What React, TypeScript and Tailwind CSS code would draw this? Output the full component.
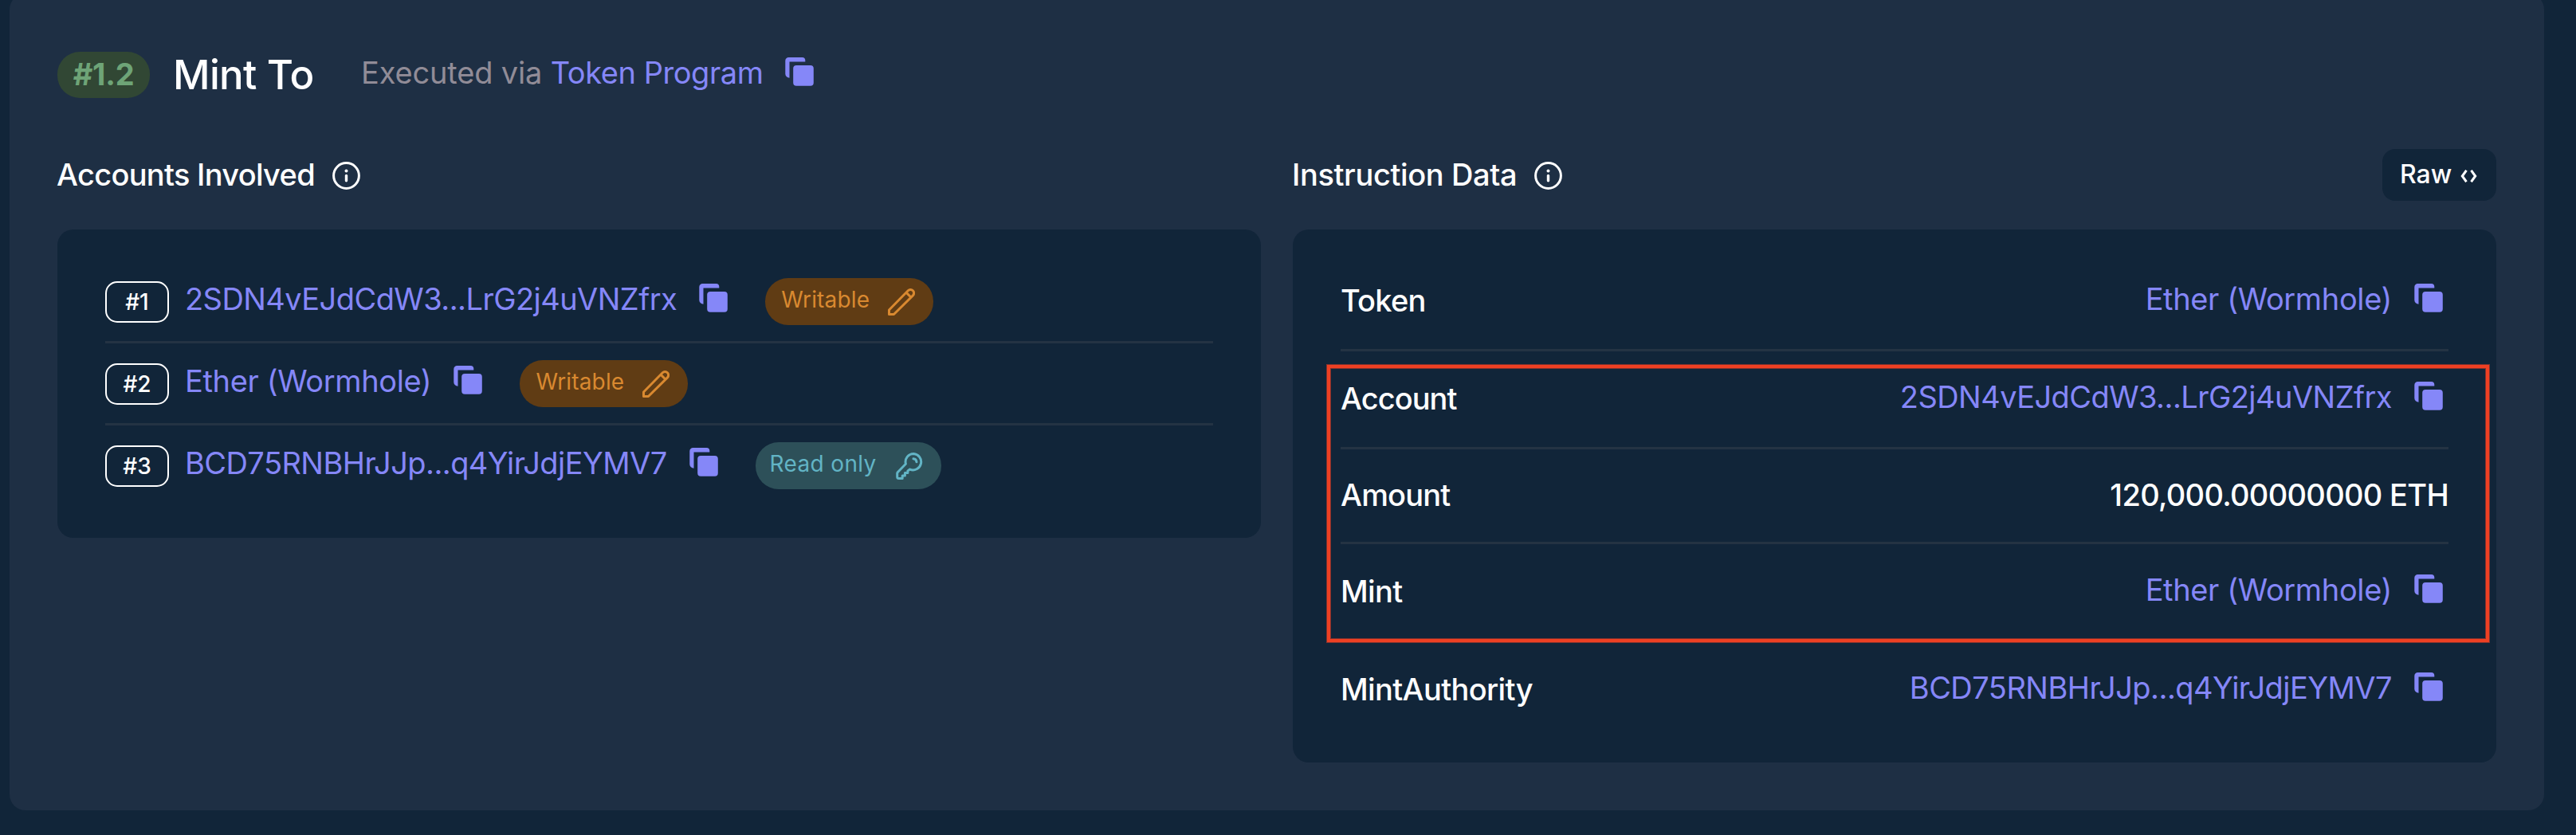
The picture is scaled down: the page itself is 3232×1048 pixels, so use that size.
import React from "react";

function CopyIcon() {
  return (
    <svg className="h-9 w-9 shrink-0" viewBox="0 0 36 36" fill="#8587f8">
      <path d="M4.500 0H21.500a3.800 3.800 0 0 1 3.800 3.800V5.500H5.500v20.200a5.200 5.200 0 0 1-5.200-5V4.200A4.200 4.200 0 0 1 4.500 0z" />
      <rect x="10.200" y="10" width="25.600" height="25.800" rx="4" />
    </svg>
  );
}

function InfoIcon() {
  return (
    <svg className="mt-0.5 h-[35px] w-[35px] shrink-0" viewBox="0 0 35 35" fill="none" stroke="#fff">
      <circle cx="17.500" cy="17.500" r="15.900" strokeWidth="3" />
      <path d="M17.500 17.500v6.300" strokeWidth="3.400" strokeLinecap="round" />
      <circle cx="17.500" cy="11.600" r="2" fill="#fff" stroke="none" />
    </svg>
  );
}

function PencilIcon() {
  return (
    <svg className="h-[34px] w-[34px] shrink-0" viewBox="0 0 34 34" fill="none" stroke="#d98930" strokeWidth="3" strokeLinejoin="round">
      <path d="M1.500 27 L25.300 2.800 a4.300 4.300 0 0 1 6.100 6.100 L7.500 32.500 H1.500z M23 5.100 l6.100 6.100" />
    </svg>
  );
}

function KeyIcon() {
  return (
    <svg className="h-[34px] w-[34px] shrink-0" viewBox="0 0 34 34" fill="none" stroke="#62b4c5" strokeWidth="3" strokeLinejoin="round" strokeLinecap="round">
      <path d="M22.300 1.500a10.200 10.200 0 0 0-9.900 12.700L2.500 24.500a2 2 0 0 0-.8 1.500v4.500a2 2 0 0 0 2 2h4.500v-3.500h3.200v-3.500h3.500v-2.600l2.700-1.800a10.200 10.200 0 1 0 4.700-19.600z" />
      <path d="M22 7.800a4.400 4.400 0 0 1 4 4" />
    </svg>
  );
}

function Pill({ kind }: { kind: "w" | "r" }) {
  const w = kind === "w";
  return (
    <span
      className={
        w
          ? "mt-px flex h-[59px] w-[211px] items-center justify-between rounded-[29px] bg-[#603c14] pr-[23px] pl-5 text-[28px] tracking-[0.16px] text-[#d98930]"
          : "mt-px flex h-[59px] w-[233px] items-center justify-between rounded-[29px] bg-[#2d5059] pr-[23px] pl-[18px] text-[28px] tracking-[0.35px] text-[#62b4c5]"
      }
    >
      <span className="mb-1.5">{w ? "Writable" : "Read only"}</span>
      {w ? <PencilIcon /> : <KeyIcon />}
    </span>
  );
}

const accounts: { n: string; name: string; kind: "w" | "r"; track: string }[] = [
  { n: "#1", name: "2SDN4vEJdCdW3...LrG2j4uVNZfrx", kind: "w", track: "tracking-[-0.56px]" },
  { n: "#2", name: "Ether (Wormhole)", kind: "w", track: "tracking-[-0.37px]" },
  { n: "#3", name: "BCD75RNBHrJJp...q4YirJdjEYMV7", kind: "r", track: "tracking-[-0.56px]" },
];

const data = [
  { label: "Token", lt: "tracking-[-0.75px]", value: "Ether (Wormhole)", track: "tracking-[-0.37px]", link: true, h: "h-[123px]" },
  { label: "Account", lt: "tracking-[-0.95px]", value: "2SDN4vEJdCdW3...LrG2j4uVNZfrx", track: "tracking-[-0.56px]", link: true, h: "h-[123px]" },
  { label: "Amount", lt: "tracking-[-0.8px]", value: "120,000.00000000 ETH", track: "tracking-[-0.7px]", link: false, h: "h-[119px]" },
  { label: "Mint", lt: "tracking-[-0.6px]", value: "Ether (Wormhole)", track: "tracking-[-0.37px]", link: true, h: "h-[123px]" },
  { label: "MintAuthority", lt: "tracking-[-0.62px]", value: "BCD75RNBHrJJp...q4YirJdjEYMV7", track: "tracking-[-0.54px]", link: true, h: "h-[123px]" },
];

export default function App() {
  return (
    <div className="h-[1048px] w-[3232px] overflow-hidden bg-[#112539] pl-3 font-['Inter',sans-serif] text-[38px] leading-none text-white">
      <main className="-mt-2 h-[1025px] w-[3180px] rounded-[20px] bg-[#1e2f44] px-[60px] pt-[73px]">
        <header className="flex h-[58px] items-center">
          <span className="flex h-[58px] w-[116px] items-center justify-center rounded-[28px] bg-[#314734] pb-0.5 text-[38px] font-bold tracking-[-0.24px] text-[#6ea477]">
            #1.2
          </span>
          <h1 className="mb-px ml-[29px] w-[236px] text-[51px] font-[450] tracking-[-0.65px]">Mint To</h1>
          <p className="mb-1.5 tracking-[-0.16px] text-[#918c97]">
            Executed via <span className="tracking-[-0.45px] text-[#8587f8]">Token Program</span>
          </p>
          <span className="mb-2 ml-[27px]">
            <CopyIcon />
          </span>
        </header>
        <div className="mt-16 flex items-start gap-10">
          <section className="w-[1510px]">
            <div className="flex h-[65px] items-center gap-[22px]">
              <h2 className="mb-px -ml-px font-[450] tracking-[-0.7px]">Accounts Involved</h2>
              <InfoIcon />
            </div>
            <div className="mt-9 h-[387px] rounded-[20px] bg-[#112539] px-[60px] pt-10">
              {accounts.map((a) => (
                <div key={a.n} className="flex h-[103px] items-center border-b-3 border-[#243343] last:border-transparent">
                  <span className="mt-0.5 flex h-[52px] w-20 items-center justify-center rounded-[15px] border-2 border-white text-[28px] font-medium">
                    {a.n}
                  </span>
                  <span className={`mb-1.5 ml-5 text-[#8587f8] ${a.track}`}>{a.name}</span>
                  <span className="mb-2 ml-7">
                    <CopyIcon />
                  </span>
                  <span className="ml-[47px]">
                    <Pill kind={a.kind} />
                  </span>
                </div>
              ))}
            </div>
          </section>
          <section className="w-[1510px]">
            <div className="flex h-[65px] items-center gap-[22px]">
              <h2 className="mb-px -ml-px font-[450] tracking-[-0.38px]">Instruction Data</h2>
              <InfoIcon />
              <button className="ml-auto flex h-[65px] w-[143px] items-center justify-between rounded-2xl bg-[#112539] pr-6 pl-[22px] text-[32px] font-medium">
                <span className="mb-px">Raw</span>
                <svg className="mt-[3px] h-4 w-[21px]" viewBox="0 0 21 16" fill="none" stroke="#fff" strokeWidth="3">
                  <path d="M7.500 .8 2.300 8l5.200 7.200M13.500 .8 18.700 8l-5.200 7.200" />
                </svg>
              </button>
            </div>
            <div className="relative mt-9 h-[669px] rounded-[20px] bg-[#112539] px-[60px] pt-[30px]">
              <div>
                {data.map((d) => (
                  <div key={d.label} className={`flex items-center justify-between border-b-3 border-[#243343] last:border-transparent ${d.h}`}>
                    <span className={`mb-0.5 font-[450] ${d.lt}`}>{d.label}</span>
                    {d.link ? (
                      <span className="flex items-center pr-[7px] text-[#8587f8]">
                        <span className={`mb-1.5 ${d.track}`}>{d.value}</span>
                        <span className="mb-2 ml-7">
                          <CopyIcon />
                        </span>
                      </span>
                    ) : (
                      <span className={`mb-0.5 font-[450] ${d.track}`}>{d.value}</span>
                    )}
                  </div>
                ))}
              </div>
              <div className="pointer-events-none absolute top-[170px] left-[43px] h-[348px] w-[1458px] border-4 border-[#ee4023] shadow-[0_0_0_1px_#ee402380,inset_0_0_0_1px_#ee402380]" />
            </div>
          </section>
        </div>
      </main>
    </div>
  );
}
